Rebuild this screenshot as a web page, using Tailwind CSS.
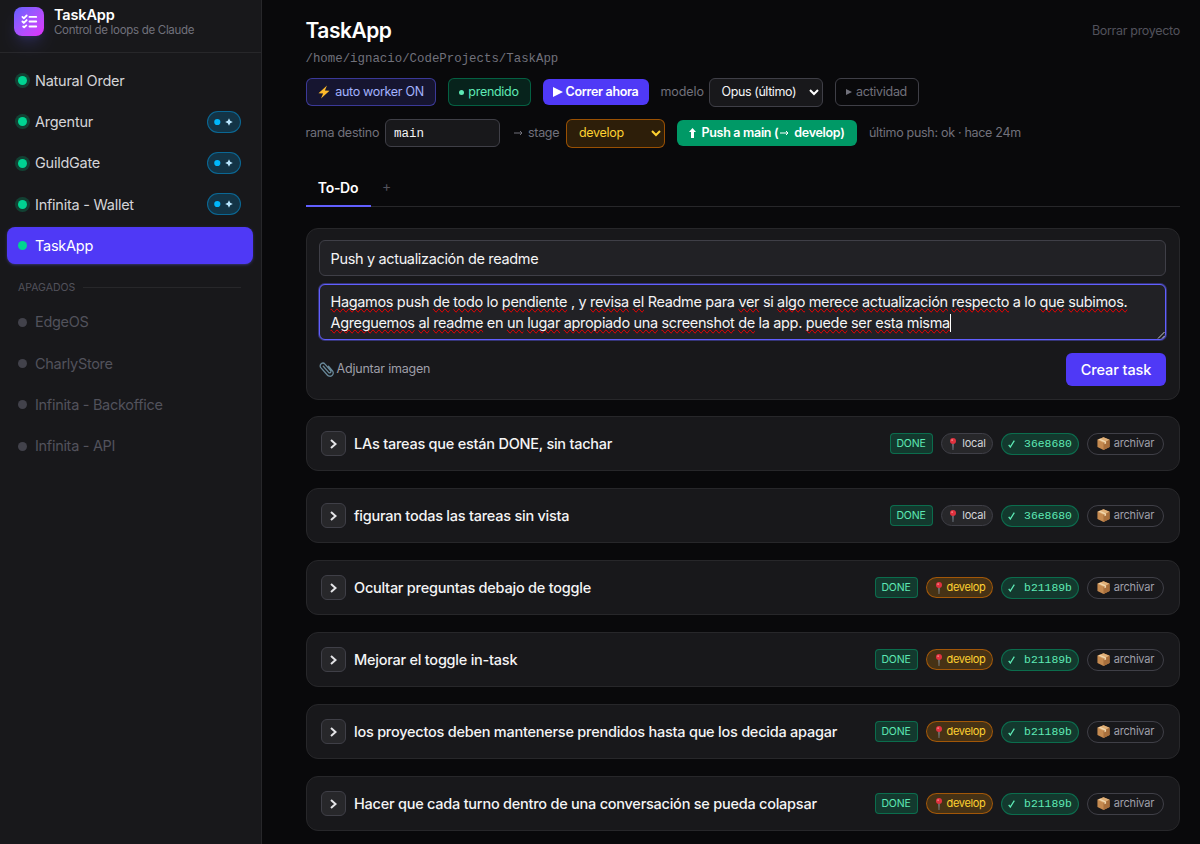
<!DOCTYPE html>
<html lang="es">
<head>
  <meta charset="UTF-8" />
  <meta name="viewport" content="width=device-width, initial-scale=1.0"/>
  <title>TaskApp</title>
  <script src="https://cdn.jsdelivr.net/npm/@tailwindcss/browser@4"></script>
</head>
<body class="bg-zinc-950 text-zinc-100 font-['Inter','Liberation_Sans',sans-serif] text-[14.5px] tracking-[-0.3px]">
  <!-- iconos compartidos -->
  <svg class="hidden">
    <symbol id="i-pin" viewBox="0 0 12 12">
      <path d="M5.4 5.5h1.2L6.3 12h-.6z" fill="#8b98a5"/>
      <circle cx="6" cy="3.1" r="3" fill="#e0323f"/>
      <circle cx="5.1" cy="2.1" r=".9" fill="#f58a8f"/>
    </symbol>
    <symbol id="i-box" viewBox="0 0 12 12">
      <path d="M6 .2 11.6 2.6V9.2L6 11.9.4 9.2V2.6z" fill="#c58a50"/>
      <path d="M6 .2 11.6 2.6 6 5.2.4 2.6z" fill="#e0b078"/>
      <path d="M6 5.2 11.6 2.6V9.2L6 11.9z" fill="#a86f3c"/>
      <path d="M2.7 1.6 8.4 4.1V6l-1.5.7V4.8L1.5 2.2z" fill="#f1d7ae"/>
    </symbol>
    <symbol id="i-live" viewBox="0 0 32 20">
      <circle cx="9.300" cy="10" r="3.100" fill="#00b7fb"/>
      <path d="M21 6.200 22.200 8.800 24.800 10 22.200 11.200 21 13.800 19.800 11.200 17.200 10 19.800 8.800z" fill="#b8e6fe"/>
    </symbol>
  </svg>

  <div class="flex h-[844px] overflow-hidden">
    <aside class="w-[262px] shrink-0 bg-zinc-900 border-r border-zinc-800">
      <div class="h-[53px] border-b border-zinc-800 flex items-start gap-2.5 pl-3.5 pt-[7px]">
        <div class="w-[30px] h-[29px] rounded-lg bg-linear-to-br from-indigo-500 to-fuchsia-500 shadow-lg shadow-indigo-500/20 flex items-center justify-center">
          <svg class="w-[17px] h-[17px]" viewBox="0 0 24 24" fill="none" stroke="white" stroke-width="2.600" stroke-linecap="round" stroke-linejoin="round">
            <path d="M2 5.500 4 7.500 8 3.500M2 12 4 14 8 10M3 19 4.500 20.200 7.500 17.500M12 5.500H21.500M12 12H21.500M12 19H21.500"/>
          </svg>
        </div>
        <div>
          <div class="text-[14.500px] leading-[16px] font-semibold text-white tracking-[-0.150px]">TaskApp</div>
          <div class="text-[11.500px] leading-[14px] text-zinc-500">Control de loops de Claude</div>
        </div>
      </div>

      <nav class="pt-[9px] pl-[7px] pr-2 flex flex-col gap-[4.300px]" id="active"></nav>
      <div class="flex items-center gap-2 pl-[18px] pr-5 h-[39.500px] pt-[7px] text-[10.500px] text-zinc-600">
        <span class="tracking-[0px]">APAGADOS</span>
        <span class="flex-1 h-px bg-zinc-800"></span>
      </div>
      <nav class="pl-[7px] pr-2 flex flex-col gap-[4.300px]" id="off"></nav>
    </aside>

    <main class="flex-1 min-w-0 pl-[43.500px] pr-5 pt-[17px]">
      <div class="flex justify-between h-[29px]">
        <h1 class="text-[21px] leading-[28px] font-semibold text-white tracking-[-0.500px]">TaskApp</h1>
        <span class="text-[12.500px] leading-[28px] text-zinc-600">Borrar proyecto</span>
      </div>
      <div class="h-6 leading-[26px] text-[12.400px] tracking-normal text-zinc-500 font-['Liberation_Mono',monospace]">/home/ignacio/CodeProjects/TaskApp</div>

      <div class="mt-2 flex items-center h-7 text-[12.500px]">
        <button class="w-[130px] h-7 rounded-md border border-indigo-500/50 bg-indigo-500/15 text-indigo-300 flex items-center justify-center gap-1">
          <svg class="w-[14px] h-[14px]" viewBox="0 0 13 14"><path d="M9.500.5 1 8.200 5.600 8.500 3.500 13.500 12 5.800 7.400 5.500z" fill="#fdb92b"/></svg>
          <span>auto worker ON</span>
        </button>
        <button class="ml-3 w-[83px] h-7 rounded-md border border-emerald-500/40 bg-emerald-500/15 text-emerald-300 flex items-center justify-center gap-1">
          <span class="w-[5px] h-[5px] rounded-full bg-emerald-300"></span><span>prendido</span>
        </button>
        <button class="ml-3 w-[106px] h-[26px] rounded-md bg-[#4f39f6] text-white font-semibold flex items-center justify-center gap-[3px]">
          <svg class="w-[10px] h-[10px]" viewBox="0 0 10 10"><path d="M0 0 10 5 0 10z" fill="white"/></svg>
          <span>Correr ahora</span>
        </button>
        <span class="ml-3 w-12 text-zinc-500 tracking-[-0.100px]">modelo</span>
        <div class="w-[114px] h-[29px] rounded-md border border-zinc-700 bg-zinc-900 flex items-center justify-between pl-3 pr-[3px]">
          <span class="text-zinc-100 tracking-[-0.400px]">Opus (último)</span>
          <svg class="w-[10px] h-[7px]" viewBox="0 0 10 7" fill="none" stroke="white" stroke-width="2"><path d="M1 1 5 5 9 1"/></svg>
        </div>
        <button class="ml-3 w-[84px] h-7 rounded-md border border-zinc-700 text-zinc-500 flex items-center justify-center gap-1">
          <svg class="w-[6px] h-[6px]" viewBox="0 0 6 6"><path d="M0 0 6 3 0 6z" fill="currentColor"/></svg>
          <span>actividad</span>
        </button>
      </div>

      <div class="mt-[13px] flex items-center h-7 text-[12.500px]">
        <span class="w-[79.500px] text-zinc-500 tracking-[-0.250px]">rama destino</span>
        <div class="w-[115px] h-7 rounded-md border border-zinc-700 bg-zinc-900 px-2 leading-[28px] tracking-normal font-['Liberation_Mono',monospace]">main</div>
        <span class="ml-3.5 w-[52px] text-zinc-500 flex items-center gap-[5px]">
          <svg class="w-[9px] h-[6px]" viewBox="0 0 9 6" fill="none" stroke="currentColor"><path d="M0 3H8M6 1 8 3 6 5"/></svg>stage
        </span>
        <div class="w-[99px] h-[29px] rounded-md border border-amber-600/60 bg-amber-500/15 text-amber-300 flex items-center justify-between pl-3 pr-[3px]">
          <span>develop</span>
          <svg class="w-[10px] h-[7px]" viewBox="0 0 10 7" fill="none" stroke="currentColor" stroke-width="2"><path d="M1 1 5 5 9 1"/></svg>
        </div>
        <button class="ml-3 w-[180px] h-[26px] rounded-md bg-[#009966] text-white font-semibold flex items-center justify-center gap-[5px]">
          <svg class="w-[7px] h-[10px]" viewBox="0 0 7 10"><path d="M3.500 0 7 4H5V10H2V4H0z" fill="white"/></svg>
          <span class="flex items-center">Push a main (<svg class="w-[9px] h-[6px] mx-[2px]" viewBox="0 0 9 6" fill="none" stroke="currentColor"><path d="M0 3H8M6 1 8 3 6 5"/></svg>&nbsp;develop)</span>
        </button>
        <span class="ml-3 text-zinc-500">último push: ok · hace 24m</span>
      </div>

      <div class="mt-[22px] h-[38px] border-b border-zinc-800 flex text-[14px]">
        <div class="w-[65px] h-[38px] border-b-2 border-indigo-500 text-center leading-[37px] font-semibold text-white">To-Do</div>
        <div class="w-8 text-center leading-[34px] text-zinc-600">+</div>
      </div>

      <section class="mt-[21px] h-[172px] rounded-xl border border-zinc-800 bg-zinc-900 pl-3 pr-[13px] pt-[11px]">
        <div class="h-9 rounded-md border border-zinc-700 bg-[#212125] px-[11px] leading-[35px] tracking-[-0.340px]">Push y actualización de readme</div>
        <div class="relative mt-2 h-14 rounded-md border border-indigo-500 ring-1 ring-indigo-500/40 bg-[#212125] px-[11px] pt-[6px] leading-[21.500px] tracking-[-0.340px] whitespace-nowrap">
          <div id="line1" class="h-[21px]"></div>
          <div class="flex items-center"><span id="line2"></span><span class="w-px h-[18px] bg-white"></span></div>
          <svg class="absolute right-0 bottom-0 w-2 h-2" viewBox="0 0 8 8" stroke="#c8c8cc" fill="none"><path d="M1 7.500 7.500 1M5 7.500 7.500 5"/></svg>
        </div>
        <div class="mt-[13px] flex items-center justify-between">
          <div class="flex items-center gap-[3px] text-[12.500px] text-zinc-400 tracking-[-0.200px]">
            <svg class="w-[15px] h-[15px]" viewBox="0 0 15 15" fill="none" stroke="#69899a" stroke-width="1.300" stroke-linecap="round">
              <path d="M4.300 4.300 9.800 10.600a1.400 1.400 0 0 0 2-1.800L6 2.200A2.700 2.700 0 0 0 1.800 5.700L8.300 13a3.300 3.300 0 0 0 5.200-4.200L9.500 4.200"/>
            </svg>
            <span>Adjuntar imagen</span>
          </div>
          <button class="w-[100px] h-[33px] rounded-md bg-[#4f39f6] text-white font-medium tracking-[-0.100px]">Crear task</button>
        </div>
      </section>

      <div id="tasks" class="mt-4 flex flex-col gap-[17px]"></div>
    </main>
  </div>

  <script>
    const projects = [['Natural Order'], ['Argentur', 1], ['GuildGate', 1], ['Infinita - Wallet', 1], ['TaskApp', 0, 1]];
    const offProjects = ['EdgeOS', 'CharlyStore', 'Infinita - Backoffice', 'Infinita - API'];
    const tasks = [
      ['LAs tareas que están DONE, sin tachar', 'local', '36e8680'],
      ['figuran todas las tareas sin vista', 'local', '36e8680'],
      ['Ocultar preguntas debajo de toggle', 'develop', 'b21189b'],
      ['Mejorar el toggle in-task', 'develop', 'b21189b'],
      ['los proyectos deben mantenerse prendidos hasta que los decida apagar', 'develop', 'b21189b'],
      ['Hacer que cada turno dentro de una conversación se pueda colapsar', 'develop', 'b21189b'],
    ];

    document.getElementById('active').innerHTML = projects.map(([name, live, sel]) => `
      <a class="h-[37px] rounded-lg flex items-center pl-[11px] pr-3 ${sel ? 'bg-[#4f39f6] text-white shadow-sm shadow-indigo-500/30' : 'text-zinc-300'}">
        <span class="w-[9px] h-[9px] rounded-full bg-[#00d492] ${sel ? '' : 'ring-3 ring-emerald-500/25'}"></span>
        <span class="ml-2 flex-1 tracking-[-0.250px]">${name}</span>
        ${live ? '<svg class="w-[34px] h-[22px] rounded-full border border-sky-500/45 bg-sky-500/20"><use href="#i-live"/></svg>' : ''}
      </a>`).join('');

    document.getElementById('off').innerHTML = offProjects.map(name => `
      <a class="h-[37px] flex items-center pl-[11px] text-zinc-600">
        <span class="w-[9px] h-[9px] rounded-full bg-[#42424b]"></span>
        <span class="ml-2">${name}</span>
      </a>`).join('');

    document.getElementById('tasks').innerHTML = tasks.map(([title, branch, hash]) => `
      <div class="h-[55px] rounded-xl border border-zinc-800 bg-zinc-900 flex items-center pl-[14px] pr-[15px] text-[11px] tracking-[-0.200px]">
        <span class="w-[25px] h-[25px] rounded-md border border-zinc-700 bg-zinc-800 flex items-center justify-center">
          <svg class="w-[7px] h-[10px]" viewBox="0 0 7 10" fill="none" stroke="#e4e4e7" stroke-width="2"><path d="M1 1 5.500 5 1 9"/></svg>
        </span>
        <span class="ml-[8.500px] flex-1 text-[14.500px] font-medium text-zinc-100 tracking-[-0.240px]">${title}</span>
        <span class="w-[43px] h-[21px] rounded-[4px] border border-emerald-500/40 bg-emerald-500/20 text-emerald-300 flex items-center justify-center text-[10.500px]">DONE</span>
        <span class="ml-2 h-[21px] rounded-full border flex items-center justify-center ${branch === 'local' ? 'w-[52px] gap-[3px] border-zinc-700 bg-zinc-800 text-zinc-300' : 'w-[67px] gap-[2px] tracking-[-0.350px] border-amber-600/60 bg-amber-500/20 text-amber-300'}">
          <svg class="w-3 h-3"><use href="#i-pin"/></svg>${branch}
        </span>
        <span class="ml-[8.500px] w-[78px] h-[22px] rounded-full border border-emerald-500/40 bg-emerald-500/20 text-emerald-300 flex items-center justify-center gap-[9px] text-[11.400px] tracking-normal font-['Liberation_Mono',monospace]">
          <svg class="w-[7px] h-[8px]" viewBox="0 0 7 8" fill="none" stroke="currentColor" stroke-width="1.300"><path d="M.7 4.800 2.300 7 6.300.7"/></svg><span class="pt-[2px]">${hash}</span>
        </span>
        <span class="ml-2 w-[77px] h-[22px] rounded-full border border-zinc-700 text-zinc-400 flex items-center justify-center gap-1">
          <svg class="w-[13px] h-[13px]"><use href="#i-box"/></svg>archivar
        </span>
      </div>`).join('');

    // palabras sin subrayado del corrector
    const known = ['push', 'lo', ',', 'y', 'Readme', 'para', 'si', 'a', 'en', 'la', 'app.'];
    const spell = text => text.split(' ').map(w => known.includes(w) ? w
      : `<span class="[text-decoration-line:spelling-error]">${w}</span>`).join(' ');
    document.getElementById('line1').innerHTML = spell('Hagamos push de todo lo pendiente , y revisa el Readme para ver si algo merece actualización respecto a lo que subimos.');
    document.getElementById('line2').innerHTML = spell('Agreguemos al readme en un lugar apropiado una screenshot de la app. puede ser esta misma');
  </script>
</body>
</html>
